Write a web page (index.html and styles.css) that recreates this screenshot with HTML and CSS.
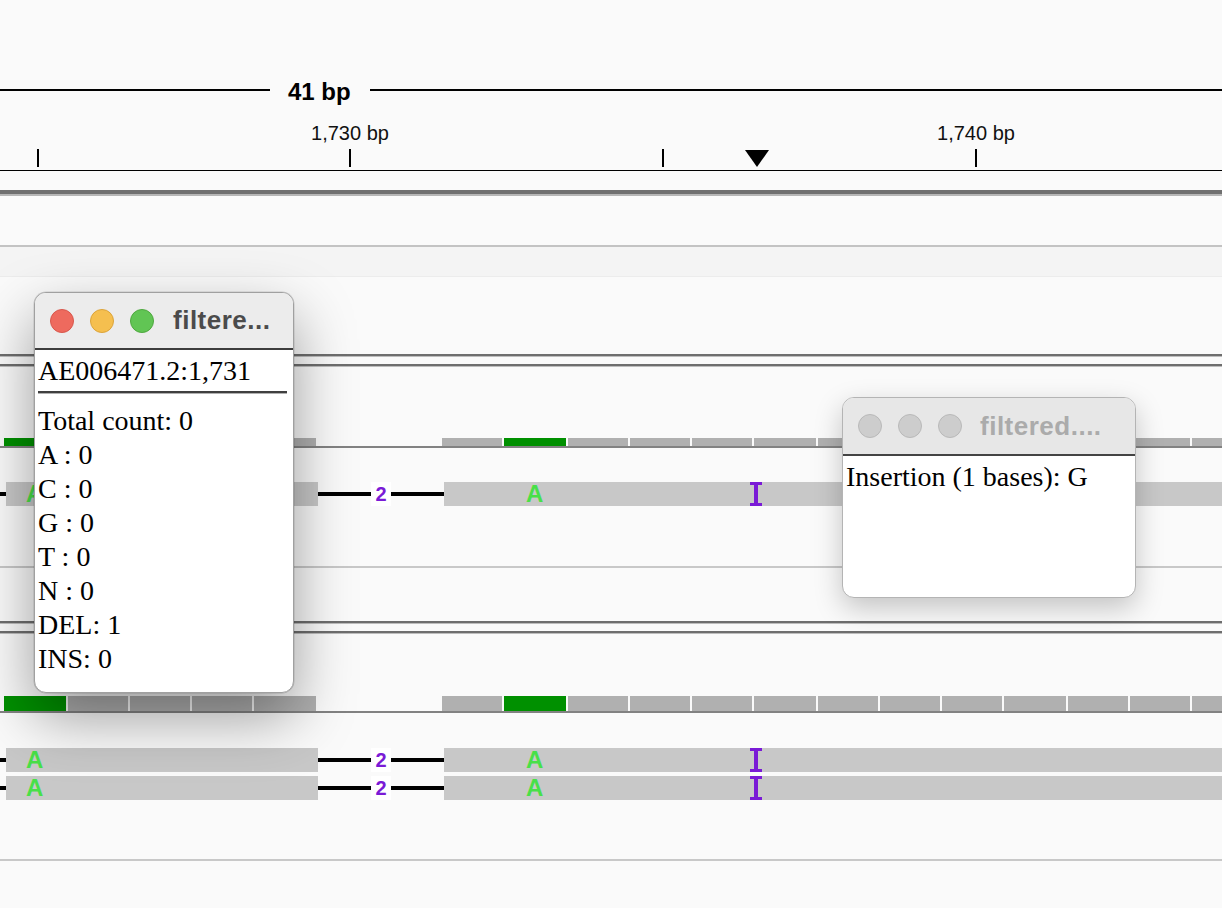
FILE: index.html
```html
<!DOCTYPE html>
<html>
<head>
<meta charset="utf-8">
<title>IGV</title>
<link rel="stylesheet" href="styles.css">
</head>
<body>
<div class="ruler">
  <div class="span-row">
    <div class="span-line left"></div>
    <div class="span-label">41 bp</div>
    <div class="span-line right"></div>
  </div>
  <div class="tick-label" style="left:350px">1,730 bp</div>
  <div class="tick-label" style="left:976px">1,740 bp</div>
  <div class="tick" style="left:37px"></div>
  <div class="tick" style="left:349px"></div>
  <div class="tick" style="left:662px"></div>
  <div class="tick" style="left:975px"></div>
  <svg class="center-mark" width="24" height="17" viewBox="0 0 24 17"><polygon points="0,0 24,0 12,17" fill="#000"/></svg>
</div>
<div class="thick"></div>
<div class="band"></div>

<section class="panel p1">
  <div class="dbl"><div class="dl"></div><div class="dl"></div></div>
  <div class="coverage">
    <div class="seg wide green"></div><div class="seg"></div><div class="seg"></div><div class="seg"></div><div class="seg wide"></div>
    <div class="seg after-gap"></div><div class="seg wide green"></div><div class="seg"></div><div class="seg"></div><div class="seg"></div><div class="seg wide"></div><div class="seg"></div><div class="seg"></div><div class="seg"></div><div class="seg wide"></div><div class="seg"></div><div class="seg"></div><div class="seg"></div>
  </div>
  <div class="reads">
    <div class="row">
      <div class="link edge"></div>
      <div class="read left"><span class="base" style="left:20px">A</span></div>
      <div class="splice"><div class="link"></div><div class="count">2</div><div class="link"></div></div>
      <div class="read right"><span class="base" style="left:82px">A</span><svg class="ins" style="left:306px" width="12" height="24" viewBox="0 0 12 24"><path d="M0 0H12V3H8V21H12V24H0V21H4V3H0Z" fill="#7a1ad6"/></svg></div>
    </div>
  </div>
  <div class="sep"></div>
</section>

<section class="panel p2">
  <div class="dbl"><div class="dl"></div><div class="dl"></div></div>
  <div class="coverage">
    <div class="seg wide green"></div><div class="seg"></div><div class="seg"></div><div class="seg"></div><div class="seg wide"></div>
    <div class="seg after-gap"></div><div class="seg wide green"></div><div class="seg"></div><div class="seg"></div><div class="seg"></div><div class="seg wide"></div><div class="seg"></div><div class="seg"></div><div class="seg"></div><div class="seg wide"></div><div class="seg"></div><div class="seg"></div><div class="seg"></div>
  </div>
  <div class="reads">
    <div class="row">
      <div class="link edge"></div>
      <div class="read left"><span class="base" style="left:20px">A</span></div>
      <div class="splice"><div class="link"></div><div class="count">2</div><div class="link"></div></div>
      <div class="read right"><span class="base" style="left:82px">A</span><svg class="ins" style="left:306px" width="12" height="24" viewBox="0 0 12 24"><path d="M0 0H12V3H8V21H12V24H0V21H4V3H0Z" fill="#7a1ad6"/></svg></div>
    </div>
    <div class="row">
      <div class="link edge"></div>
      <div class="read left"><span class="base" style="left:20px">A</span></div>
      <div class="splice"><div class="link"></div><div class="count">2</div><div class="link"></div></div>
      <div class="read right"><span class="base" style="left:82px">A</span><svg class="ins" style="left:306px" width="12" height="24" viewBox="0 0 12 24"><path d="M0 0H12V3H8V21H12V24H0V21H4V3H0Z" fill="#7a1ad6"/></svg></div>
    </div>
  </div>
  <div class="sep"></div>
</section>

<div class="win active win-left">
  <div class="titlebar">
    <span class="light red"></span><span class="light yellow"></span><span class="light green"></span>
    <span class="title">filtere...</span>
  </div>
  <div class="content">
    <div class="line">AE006471.2:1,731</div>
    <div class="rule"></div>
    <div class="line">Total count: 0</div>
    <div class="line">A : 0</div>
    <div class="line">C : 0</div>
    <div class="line">G : 0</div>
    <div class="line">T : 0</div>
    <div class="line">N : 0</div>
    <div class="line">DEL: 1</div>
    <div class="line">INS: 0</div>
  </div>
</div>

<div class="win inactive win-right">
  <div class="titlebar">
    <span class="light"></span><span class="light"></span><span class="light"></span>
    <span class="title">filtered....</span>
  </div>
  <div class="content">
    <div class="line">Insertion (1 bases): G</div>
  </div>
</div>
</body>
</html>
```

FILE: styles.css
```css
* { box-sizing: border-box; }
html, body { margin: 0; padding: 0; }
body {
  width: 1222px;
  height: 908px;
  overflow: hidden;
  position: relative;
  background: #fafafa;
  font-family: "Liberation Sans", Arial, sans-serif;
}

/* ruler */
.ruler {
  position: relative;
  height: 171px;
  padding-top: 79px;
  border-bottom: 1px solid #000;
}
.span-row { display: flex; height: 26px; }
.span-line { height: 2px; background: #000; margin-top: 10px; }
.span-line.left { width: 270px; flex: none; }
.span-line.right { flex: 1; }
.span-label {
  padding: 0 19px 0 18px;
  font-weight: bold;
  font-size: 24px;
  line-height: 26px;
  color: #000;
  white-space: nowrap;
}
.tick-label {
  position: absolute;
  top: 123px;
  transform: translateX(-50%);
  font-size: 20px;
  line-height: 20px;
  color: #111;
  white-space: nowrap;
}
.tick { position: absolute; top: 149px; width: 2px; height: 18px; background: #000; }
.center-mark { position: absolute; top: 150px; left: 745px; display: block; }

.thick {
  margin-top: 19px;
  height: 6px;
  background: #707070;
  border-bottom: 2px solid #b6b6b6;
}
.band {
  margin-top: 49px;
  height: 32px;
  background: #f4f4f4;
  border-top: 2px solid #c3c3c3;
  border-bottom: 1px solid #ececec;
}

/* panels */
.dbl { display: flex; flex-direction: column; gap: 7px; }
.p1 .dbl { margin-top: 77px; }
.p2 .dbl { margin-top: 53px; }
.dl { height: 3px; background: #6e6e6e; border-bottom: 1px solid #bdbdbd; }

.coverage {
  display: flex;
  align-items: flex-end;
  gap: 2px;
  padding-left: 4px;
  border-bottom: 2px solid #828282;
  overflow: hidden;
}
.p1 .coverage { height: 81px; }
.p2 .coverage { height: 79px; }
.seg { flex: none; width: 60px; background: #b0b0b0; }
.seg.wide { width: 62px; }
.seg.green { background: #009000; }
.seg.after-gap { margin-left: 124px; }
.p1 .seg { height: 8px; }
.p2 .seg { height: 15px; }

.reads { display: flex; flex-direction: column; gap: 4px; }
.p1 .reads { padding-top: 34px; }
.p2 .reads { padding-top: 35px; }
.row { display: flex; align-items: center; height: 24px; }
.link { height: 4px; background: #000; flex: 1; }
.link.edge { flex: none; width: 6px; }
.read { position: relative; height: 24px; background: #c8c8c8; }
.read.left { flex: none; width: 312px; }
.read.right { flex: 1; }
.splice { flex: none; width: 126px; display: flex; align-items: center; }
.count {
  flex: none;
  width: 20px;
  height: 24px;
  background: #fff;
  color: #7a1ad6;
  font-weight: bold;
  font-size: 20px;
  line-height: 25px;
  text-align: center;
}
.base {
  position: absolute;
  top: 0;
  font-weight: bold;
  font-size: 24px;
  line-height: 24px;
  color: #48e048;
}
.ins { position: absolute; top: 0; display: block; }

.sep { height: 2px; background: #c8c8c8; }
.p1 .sep { margin-top: 60px; }
.p2 .sep { margin-top: 59px; }

/* popup windows */
.win {
  position: absolute;
  background: #fff;
  border: 1px solid #a0a0a0;
  border-radius: 12px;
  overflow: hidden;
}
.win-left {
  left: 34px; top: 292px; width: 260px; height: 401px;
  box-shadow: 0 24px 60px rgba(0,0,0,0.38), 0 0 0 0.5px rgba(0,0,0,0.15);
}
.win-right {
  left: 842px; top: 397px; width: 294px; height: 201px;
  border-color: #b4b4b4;
  box-shadow: 0 10px 28px rgba(0,0,0,0.22);
}
.titlebar {
  display: flex;
  align-items: center;
  gap: 16px;
  padding-left: 15px;
  background: #ececec;
  border-bottom: 2px solid #3d3d3d;
}
.win-left .titlebar { height: 57px; }
.win-right .titlebar { height: 58px; background: #e7e7e7; border-bottom-color: #444; }
.light {
  flex: none;
  width: 24px; height: 24px;
  border-radius: 50%;
  background: #cdcdcd;
  border: 1px solid #b9b9b9;
}
.light.red { background: #ee6a5e; border-color: #d8574c; }
.light.yellow { background: #f5bf4f; border-color: #dca43a; }
.light.green { background: #61c554; border-color: #4fa83f; }
.title {
  margin-left: 3px;
  font-weight: bold;
  font-size: 26px;
  letter-spacing: 0.5px;
  color: #4b4b4b;
  white-space: nowrap;
}
.win-right .title { margin-left: 2px; color: #ababab; }
.content {
  padding: 4px 3px 0 3px;
  font-family: "Liberation Serif", "Times New Roman", serif;
  font-size: 28px;
  line-height: 34px;
  color: #000;
}
.line { white-space: nowrap; }
.rule {
  margin: 3px 3px 10px 0;
  height: 3px;
  background: #3f3f3f;
  border-bottom: 1px solid #b0b0b0;
}
```
